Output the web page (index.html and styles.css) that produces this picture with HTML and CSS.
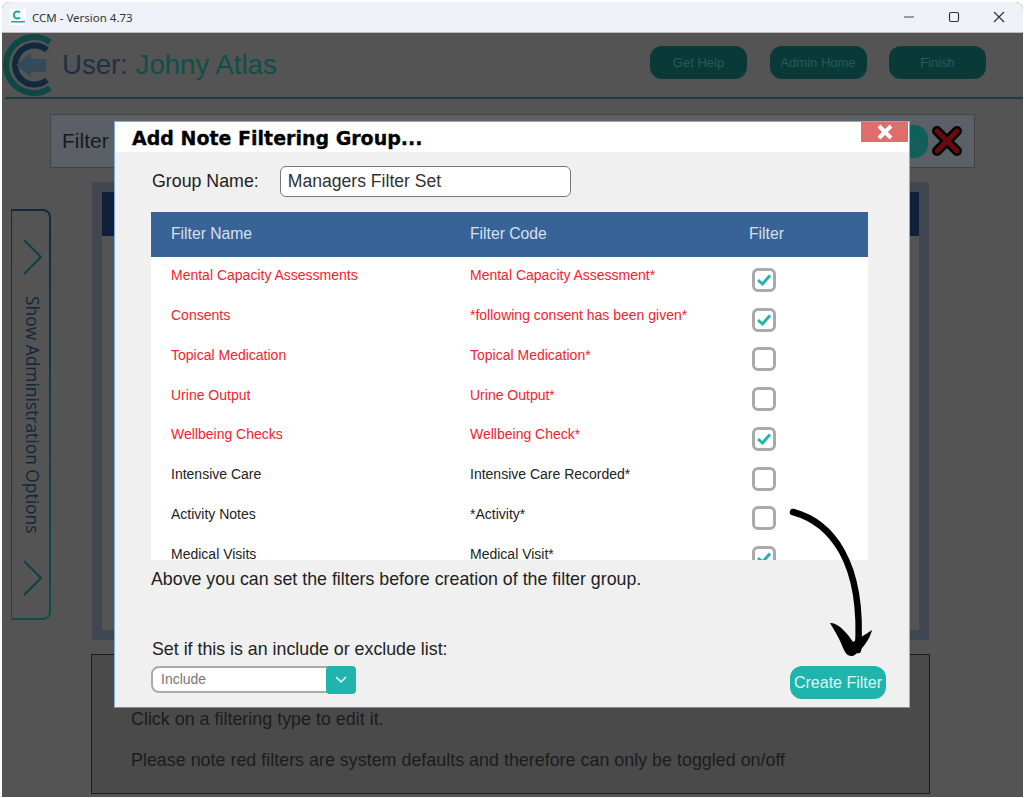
FILE: index.html
```html
<!DOCTYPE html>
<html lang="en">
<head>
  <meta charset="UTF-8">
  <meta name="viewport" content="width=device-width, initial-scale=1.0">
  <title>CCM - Version 4.73</title>
  <link rel="stylesheet" href="styles.css">
</head>
<body>
  <div class="window">
    <div class="titlebar">
      <div class="title-left">
        <svg class="title-logo" width="16" height="16" viewBox="0 0 16 16">
          <rect width="16" height="16" fill="#fff"/>
          <path d="M10 3.5 A3.6 3.6 0 1 0 10 8.5" fill="none" stroke="#1aa9a3" stroke-width="2"/>
          <rect x="1" y="12" width="14" height="1.5" fill="#3d8fb0"/>
        </svg>
        <span class="title-text">CCM - Version 4.73</span>
      </div>
      <div class="win-controls">
        <svg width="12" height="12" viewBox="0 0 12 12"><path d="M1 6H11" stroke="#444" stroke-width="1.2"/></svg>
        <svg width="12" height="12" viewBox="0 0 12 12"><rect x="1.5" y="1.5" width="9" height="9" rx="1.5" fill="none" stroke="#333" stroke-width="1.2"/></svg>
        <svg width="12" height="12" viewBox="0 0 12 12"><path d="M1 1L11 11M11 1L1 11" stroke="#333" stroke-width="1.2"/></svg>
      </div>
    </div>

    <div class="app">
      <div class="app-header">
        <div class="user-block">
          <svg class="app-logo" width="54" height="64" viewBox="0 0 54 64">
            <path d="M50 9 A28 28 0 1 0 50 55" fill="none" stroke="#0d4844" stroke-width="6"/>
            <path d="M47 17 A19.500 19.500 0 1 0 47 47" fill="none" stroke="#12283f" stroke-width="6"/>
            <path d="M16 32 L31 20 V26 H46 V39 H31 V44 Z" fill="#34495a"/>
          </svg>
          <div class="user-name">User: <span>Johny Atlas</span></div>
        </div>
        <div class="header-btns">
          <div class="header-btn">Get Help</div>
          <div class="header-btn">Admin Home</div>
          <div class="header-btn">Finish</div>
        </div>
      </div>

      <div class="filter-bar">
        <span class="filter-label">Filter</span>
        <div class="filter-actions">
          <div class="filter-go">p</div>
          <svg width="30" height="30" viewBox="0 0 30 30">
            <path d="M5 5L25 25M25 5L5 25" stroke="#000" stroke-width="10" stroke-linecap="round"/>
            <path d="M5 5L25 25M25 5L5 25" stroke="#6a0a0a" stroke-width="5" stroke-linecap="round"/>
          </svg>
        </div>
      </div>

      <div class="workspace">
        <div class="side-tab">
          <svg width="22" height="36" viewBox="0 0 22 36"><path d="M2 1L19 18L2 35" fill="none" stroke="#0f3f4a" stroke-width="2"/></svg>
          <span class="side-text">Show Administration Options</span>
          <svg width="22" height="36" viewBox="0 0 22 36"><path d="M2 1L19 18L2 35" fill="none" stroke="#0f3f4a" stroke-width="2"/></svg>
        </div>
        <div class="panel">
          <div class="panel-head"></div>
        </div>
      </div>

      <div class="help-box">
        <p>Click on a filtering type to edit it.</p>
        <p>Please note red filters are system defaults and therefore can only be toggled on/off</p>
      </div>
    </div>
  </div>

  <div class="modal">
    <div class="modal-title">
      <h1>Add Note Filtering Group...</h1>
      <div class="modal-close">
        <svg width="18" height="16" viewBox="0 0 18 16"><path d="M3 2L15 14M15 2L3 14" stroke="#fff" stroke-width="4"/></svg>
      </div>
    </div>
    <div class="modal-body">
      <div class="group-row">
        <label class="group-label">Group Name:</label>
        <div class="group-input">Managers Filter Set</div>
      </div>

      <div class="table-wrap">
        <table class="filter-table">
          <thead>
            <tr><th class="col-name">Filter Name</th><th class="col-code">Filter Code</th><th>Filter</th></tr>
          </thead>
          <tbody>
            <tr class="system">
              <td>Mental Capacity Assessments</td><td>Mental Capacity Assessment*</td>
              <td><span class="check on"><svg width="16" height="14" viewBox="0 0 16 14"><path d="M2 7L6.500 11L14 2.500" fill="none" stroke="#1fb5ad" stroke-width="3"/></svg></span></td>
            </tr>
            <tr class="system">
              <td>Consents</td><td>*following consent has been given*</td>
              <td><span class="check on"><svg width="16" height="14" viewBox="0 0 16 14"><path d="M2 7L6.500 11L14 2.500" fill="none" stroke="#1fb5ad" stroke-width="3"/></svg></span></td>
            </tr>
            <tr class="system">
              <td>Topical Medication</td><td>Topical Medication*</td>
              <td><span class="check"></span></td>
            </tr>
            <tr class="system">
              <td>Urine Output</td><td>Urine Output*</td>
              <td><span class="check"></span></td>
            </tr>
            <tr class="system">
              <td>Wellbeing Checks</td><td>Wellbeing Check*</td>
              <td><span class="check on"><svg width="16" height="14" viewBox="0 0 16 14"><path d="M2 7L6.500 11L14 2.500" fill="none" stroke="#1fb5ad" stroke-width="3"/></svg></span></td>
            </tr>
            <tr>
              <td>Intensive Care</td><td>Intensive Care Recorded*</td>
              <td><span class="check"></span></td>
            </tr>
            <tr>
              <td>Activity Notes</td><td>*Activity*</td>
              <td><span class="check"></span></td>
            </tr>
            <tr>
              <td>Medical Visits</td><td>Medical Visit*</td>
              <td><span class="check on"><svg width="16" height="14" viewBox="0 0 16 14"><path d="M2 7L6.500 11L14 2.500" fill="none" stroke="#1fb5ad" stroke-width="3"/></svg></span></td>
            </tr>
          </tbody>
        </table>
      </div>

      <p class="note">Above you can set the filters before creation of the filter group.</p>

      <div class="modal-footer">
        <div>
          <div class="list-label">Set if this is an include or exclude list:</div>
          <div class="select">
            <span class="select-value">Include</span>
            <span class="select-btn">
              <svg width="12" height="8" viewBox="0 0 12 8"><path d="M1 1L6 6L11 1" fill="none" stroke="#e6fafa" stroke-width="1.500"/></svg>
            </span>
          </div>
        </div>
        <div class="create-btn">Create Filter</div>
      </div>
    </div>
  </div>

  <!-- hand drawn arrow pointing at the button -->
  <svg class="arrow" width="1024" height="798" viewBox="0 0 1024 798">
    <path d="M793 512 C830 522 864 560 858 650" fill="none" stroke="#000" stroke-width="6.500" stroke-linecap="round"/>
    <path d="M830 623 C838 622 848 634 853 642 L866 634 L872 630 C870 640 860 652 853 656 C846 657 844 650 841 643 C838 636 834 630 830 623 Z" fill="#000"/>
  </svg>
</body>
</html>
```

FILE: styles.css
```css
* {
  box-sizing: border-box;
}

html, body {
  margin: 0;
  padding: 0;
  height: 100%;
  background-color: #fff;
  overflow: hidden;
}

body {
  font-family: "Liberation Sans", Arial, sans-serif;
  padding: 2px 1px 1px 2px;
}

.window {
  height: 795px;
  display: flex;
  flex-direction: column;
  border-radius: 8px 8px 0 0;
  overflow: hidden;
  background-color: #545454;
}

.titlebar {
  height: 31px;
  flex-shrink: 0;
  display: flex;
  justify-content: space-between;
  align-items: center;
  background-color: #eef2f8;
  border-bottom: 1px solid #bbb;
}

.title-left {
  display: flex;
  align-items: center;
  gap: 6px;
  padding-left: 8px;
}

.title-text {
  font-family: "Noto Sans", sans-serif;
  font-size: 11.5px;
  color: #333;
}

.win-controls {
  display: flex;
  gap: 33px;
  padding-right: 18px;
}

.app {
  flex: 1;
  display: flex;
  flex-direction: column;
  min-height: 0;
}

.app-header {
  height: 66px;
  display: flex;
  justify-content: space-between;
  align-items: center;
  margin-left: 3px;
  padding-bottom: 6px;
  border-bottom: 2px solid #1b3d47;
}

.user-block {
  display: flex;
  align-items: center;
  gap: 8px;
  margin-left: -5px;
  margin-top: 6px;
}

.app-logo {
  flex-shrink: 0;
}

.user-name {
  font-size: 27.6px;
  color: #1c3244;
}

.user-name span {
  color: #0f4f4a;
}

.header-btns {
  display: flex;
  gap: 22.5px;
  padding-right: 37px;
}

.header-btn {
  width: 97px;
  height: 33px;
  display: flex;
  align-items: center;
  justify-content: center;
  background-color: #0a3a38;
  border-radius: 12px;
  color: #2b5a56;
  font-size: 13px;
}

.filter-bar {
  height: 54px;
  margin: 15px 48px 14px 48px;
  padding: 0 12px 0 11px;
  display: flex;
  justify-content: space-between;
  align-items: center;
  background-color: #5b6066;
  border: 1px solid #444;
}

.filter-label {
  font-size: 21px;
  color: #1a1a1a;
}

.filter-actions {
  display: flex;
  align-items: center;
  gap: 4px;
}

.filter-go {
  width: 60px;
  height: 33px;
  border-radius: 14px;
  background-color: #0f5f5a;
  color: #2b5a56;
  font-size: 13px;
  line-height: 33px;
  text-align: right;
  padding-right: 8px;
}

.workspace {
  display: flex;
  margin-left: 9px;
  margin-right: 94px;
  height: 458px;
}

.side-tab {
  width: 40px;
  height: 411px;
  margin-top: 27px;
  margin-right: 41px;
  flex-shrink: 0;
  display: flex;
  flex-direction: column;
  align-items: center;
  justify-content: space-between;
  padding: 28px 0 22px 4px;
  border: 2px solid transparent;
  border-left-width: 1px;
  border-radius: 0 8px 8px 0;
  background: linear-gradient(#545454, #545454) padding-box, linear-gradient(#0f2a44, #0d4f4a) border-box;
}

.side-text {
  writing-mode: vertical-rl;
  margin-bottom: 6px;
  font-family: "Open Sans", sans-serif;
  font-size: 17.4px;
  color: #12283a;
}

.panel {
  flex: 1;
  border: 10px solid #414750;
}

.panel-head {
  height: 44px;
  background-color: #10203a;
}

.help-box {
  height: 140px;
  margin: 14px 93px 0 89px;
  padding: 54px 39px 0 39px;
  background-color: #4a4a4a;
  border: 1px solid #1c1c1c;
  color: #1c1c1c;
  font-size: 17.9px;
}

.help-box p {
  margin: 0 0 20px 0;
}

/* dialog */
.modal {
  position: absolute;
  left: 114px;
  top: 121px;
  width: 796px;
  height: 587px;
  display: flex;
  flex-direction: column;
  background-color: #f0f0f0;
  border: 1.5px solid #7fb0dc;
  border-bottom-color: #6f8faa;
}

.modal-title {
  height: 30px;
  flex-shrink: 0;
  display: flex;
  justify-content: space-between;
  background-color: #fff;
}

.modal-title h1 {
  margin: 0;
  padding: 5px 0 0 17px;
  font-family: "DejaVu Sans", sans-serif;
  font-size: 19px;
  font-weight: bold;
  color: #000;
  -webkit-text-stroke: 0.3px #000;
}

.modal-close {
  width: 47px;
  height: 20px;
  margin-right: 1px;
  display: flex;
  align-items: center;
  justify-content: center;
  background-color: #e06c6c;
}

.modal-body {
  flex: 1;
  display: flex;
  flex-direction: column;
  padding: 14px 23px 14px 36px;
}

.group-row {
  display: flex;
  align-items: center;
  padding-left: 1px;
  gap: 21px;
}

.group-label {
  font-size: 17.8px;
  color: #222;
}

.group-input {
  width: 291px;
  height: 31px;
  padding: 0 7px;
  line-height: 28px;
  background-color: #fff;
  border: 1.500px solid #777;
  border-radius: 6px;
  font-size: 17.6px;
  color: #333;
}

.table-wrap {
  margin-top: 15px;
  height: 348px;
  overflow: hidden;
  background-color: #fff;
  width: 717px;
}

.filter-table {
  width: 100%;
  border-collapse: collapse;
  table-layout: fixed;
}

.filter-table th {
  height: 45px;
  padding: 0 0 2px 20px;
  text-align: left;
  font-size: 15.7px;
  font-weight: normal;
  color: #d7e0ec;
  background-color: #386397;
}

.filter-table .col-name {
  width: 299px;
}

.filter-table .col-code {
  width: 279px;
}

.filter-table td {
  height: 39.75px;
  padding: 0 0 3px 20px;
  font-size: 14px;
  color: #222;
}

.filter-table td:last-child {
  padding: 6px 0 0 23px;
}

.filter-table .system td {
  color: #f5222d;
}

.check {
  width: 24px;
  height: 24px;
  display: flex;
  align-items: center;
  justify-content: center;
  background-color: #fff;
  border: 3px solid #aaa;
  border-radius: 6px;
}

.note {
  margin: 9px 0 0 0;
  font-size: 17.8px;
  color: #222;
}

.modal-footer {
  margin-top: auto;
  display: flex;
  justify-content: space-between;
  align-items: flex-end;
}

.list-label {
  padding-left: 1px;
  margin-bottom: 6px;
  font-size: 17.8px;
  color: #222;
}

.select {
  width: 205px;
  height: 27px;
  display: flex;
  justify-content: space-between;
  background-color: #fff;
  border: 2px solid #aaa;
  border-radius: 8px;
}

.select-value {
  padding-left: 8px;
  line-height: 23px;
  font-size: 14px;
  color: #777;
}

.select-btn {
  width: 30px;
  height: 28px;
  margin: -2px -2px 0 0;
  display: flex;
  align-items: center;
  justify-content: center;
  background-color: #1fb5ad;
  border-radius: 4px;
}

.create-btn {
  width: 96px;
  height: 33px;
  margin-bottom: -6px;
  text-align: center;
  line-height: 33px;
  background-color: #1fb5ad;
  border-radius: 12px;
  color: #dff7f5;
  font-size: 16px;
}

.arrow {
  position: absolute;
  left: 0;
  top: 0;
  pointer-events: none;
}
```
